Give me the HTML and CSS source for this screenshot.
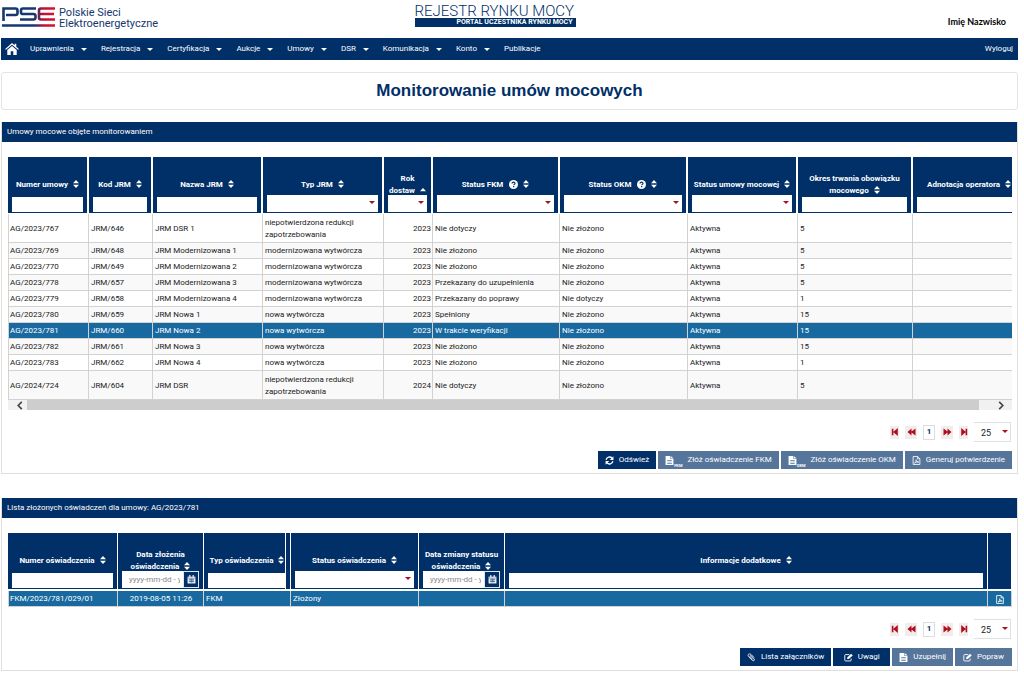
FILE: index.html
```html
<!DOCTYPE html>
<html lang="pl">
<head>
<meta charset="utf-8">
<title>Monitorowanie umów mocowych</title>
<link rel="stylesheet" href="styles.css">
</head>
<body>
<svg class="sprite" aria-hidden="true">
  <symbol id="sort" viewBox="0 0 6 8"><path d="M3 0 6 3.3H0zM0 4.7h6L3 8z"/></symbol>
  <symbol id="asc" viewBox="0 0 6 8"><path d="M3 2 6 5.3H0z"/></symbol>
  <symbol id="help" viewBox="0 0 16 16"><circle cx="8" cy="8" r="8"/><path d="M5.4 6.2C5.4 4.6 6.6 3.8 8 3.8s2.7.8 2.7 2.3C10.700 7.700 8.300 7.800 8.300 9.500" fill="none" stroke="#012f67" stroke-width="2"/><path d="M7.200 10.700h2.200v2.100H7.200z" fill="#012f67"/></symbol>
  <symbol id="cal" viewBox="0 0 16 16"><path d="M1 3h14v12H1z"/><path d="M4 0h2v4H4zM10 0h2v4h-2z"/><path d="M1 5.500h14M3 8.500h10M3 11.500h10M5.500 6.500v7M8 6.500v7M10.500 6.500v7" stroke="#012f67" stroke-width=".9"/></symbol>
  <symbol id="pdf" viewBox="0 0 14 16"><path d="M1 1h8l4 4v10H1zM9 1v4h4M3.500 12.500C6 11 7 8 6.500 6.500 6.500 9 8.500 11 11 10.800 8.500 10.300 5.500 11 3.500 12.500z" fill="none" stroke="currentColor" stroke-width="1.500"/></symbol>
  <symbol id="doc" viewBox="0 0 14 16"><path fill-rule="evenodd" d="M0 0h8v5h6v11H0zM9 0l5 4H9zM3 7.500v1.200h8V7.500zM3 10v1.200h8V10zM3 12.500v1.200h8v-1.200z"/></symbol>
  <symbol id="refresh" viewBox="0 0 16 16"><path d="M2 7a6 6 0 0 1 10.500-3M14 9a6 6 0 0 1-10.500 3" fill="none" stroke="currentColor" stroke-width="2.400"/><path d="M15 .5V7H8.500zM1 15.500V9h6.500z"/></symbol>
  <symbol id="clip" viewBox="0 0 16 16"><path d="M12.500 8 7.500 3C5.500 1 3 1.500 2.300 2.800 1.500 4 2 5.500 3 6.500l6.500 6.500c2.500 2 5-.5 3-2.800L7.500 5.300C6 4 4.500 5.300 5.700 6.800l4.500 4.500" fill="none" stroke="currentColor" stroke-width="1.600"/></symbol>
  <symbol id="edit" viewBox="0 0 17 16"><path d="M10 2.500H3Q1.500 2.500 1.500 4v9Q1.500 14.500 3 14.500h9q1.500 0 1.500-1.500v-3" fill="none" stroke="currentColor" stroke-width="1.700"/><path d="m6 8 7.500-7L16.500 4 9 11H6z"/></symbol>
  <symbol id="first" viewBox="0 0 10 10"><path d="M1 1h2v3.600L8.500 0v10L3 5.400V9H1z"/></symbol>
  <symbol id="prev" viewBox="0 0 10 10"><path d="M0 5 5 .5V4.500L10 .5v9L5 5.500v4z"/></symbol>
  <symbol id="left" viewBox="0 0 8 10"><path d="M6 1 2 5l4 4" fill="none" stroke="currentColor" stroke-width="1.800"/></symbol>
</svg>

<header class="top">
  <a class="brand" href="#" aria-label="PSE Polskie Sieci Elektroenergetyczne">
    <svg class="pse" viewBox="0 0 53 21" aria-hidden="true">
      <defs><linearGradient id="g" gradientUnits="userSpaceOnUse" x1="0" y1="0" x2="53" y2="0"><stop offset="0" stop-color="#14386f"/><stop offset=".6" stop-color="#14386f"/><stop offset=".8" stop-color="#c8102e"/><stop offset="1" stop-color="#d9122f"/></linearGradient></defs>
      <path d="M1.500 14V1.500H13.500Q15.500 1.500 15.500 3.500V6Q15.500 8 13.500 8H4M34 1.500H21Q19 1.500 19 3.300V5.200Q19 7 21 7H31.500Q33.500 7 33.500 9V10.500Q33.500 12.500 31.500 12.500H18M53 1.500H39Q37 1.500 37 3.500V10.500Q37 12.500 39 12.500H53M37 7H52M0 18.500H53" fill="none" stroke="url(#g)" stroke-width="2.600"/>
    </svg>
    <span class="brand-name">Polskie Sieci<br>Elektroenergetyczne</span>
  </a>
  <div class="portal"><span class="portal-name">REJESTR RYNKU MOCY</span><span class="portal-sub">PORTAL UCZESTNIKA RYNKU MOCY</span></div>
  <span class="user">Imię Nazwisko</span>
</header>

<nav class="nav">
  <a class="home" href="#" aria-label="Strona główna"><svg viewBox="0 0 16 14" aria-hidden="true"><path d="M8 0 0 7l1 1 7-6 7 6 1-1-3-2.700V1h-2v1.600zM8 3.500 2.500 8.200V14h4V9.500h3V14h4V8.200z"/></svg></a>
  <button class="menu">Uprawnienia</button>
  <button class="menu">Rejestracja</button>
  <button class="menu">Certyfikacja</button>
  <button class="menu">Aukcje</button>
  <button class="menu">Umowy</button>
  <button class="menu">DSR</button>
  <button class="menu">Komunikacja</button>
  <button class="menu">Konto</button>
  <a href="#">Publikacje</a>
  <a class="logout" href="#">Wyloguj</a>
</nav>

<main>
<h1 class="title">Monitorowanie umów mocowych</h1>

<section class="panel">
  <h2 class="panel-head">Umowy mocowe objęte monitorowaniem</h2>
  <div class="panel-body">
    <div class="viewport">
    <table class="grid contracts">
      <colgroup><col class="w81"><col class="w64"><col class="w110"><col class="w121"><col class="w49"><col class="w127"><col class="w128"><col class="w110"><col class="w115"><col class="w114"></colgroup>
      <thead><tr>
        <th><div class="label"><span>Numer umowy <svg class="sort"><use href="#sort"/></svg></span></div><input aria-label="Numer umowy"></th>
        <th><div class="label"><span>Kod JRM <svg class="sort"><use href="#sort"/></svg></span></div><input aria-label="Kod JRM"></th>
        <th><div class="label"><span>Nazwa JRM <svg class="sort"><use href="#sort"/></svg></span></div><input aria-label="Nazwa JRM"></th>
        <th><div class="label"><span>Typ JRM <svg class="sort"><use href="#sort"/></svg></span></div><div class="pick"><select aria-label="Typ JRM"><option></option></select></div></th>
        <th><div class="label"><span>Rok dostaw <svg class="sort"><use href="#asc"/></svg></span></div><div class="pick"><select aria-label="Rok dostaw"><option></option></select></div></th>
        <th><div class="label"><span>Status FKM <svg class="help"><use href="#help"/></svg><svg class="sort"><use href="#sort"/></svg></span></div><div class="pick"><select aria-label="Status FKM"><option></option></select></div></th>
        <th><div class="label"><span>Status OKM <svg class="help"><use href="#help"/></svg><svg class="sort"><use href="#sort"/></svg></span></div><div class="pick"><select aria-label="Status OKM"><option></option></select></div></th>
        <th><div class="label"><span>Status umowy mocowej <svg class="sort"><use href="#sort"/></svg></span></div><div class="pick"><select aria-label="Status umowy mocowej"><option></option></select></div></th>
        <th><div class="label"><span>Okres trwania obowiązku mocowego <svg class="sort"><use href="#sort"/></svg></span></div><input aria-label="Okres trwania obowiązku mocowego"></th>
        <th><div class="label"><span>Adnotacja operatora <svg class="sort"><use href="#sort"/></svg></span></div><input aria-label="Adnotacja operatora"></th>
      </tr></thead>
      <tbody>
        <tr class="tall"><td>AG/2023/767</td><td>JRM/646</td><td>JRM DSR 1</td><td>niepotwierdzona redukcji zapotrzebowania</td><td class="num">2023</td><td>Nie dotyczy</td><td>Nie złożono</td><td>Aktywna</td><td>5</td><td></td></tr>
        <tr><td>AG/2023/769</td><td>JRM/648</td><td>JRM Modernizowana 1</td><td>modernizowana wytwórcza</td><td class="num">2023</td><td>Nie złożono</td><td>Nie złożono</td><td>Aktywna</td><td>5</td><td></td></tr>
        <tr><td>AG/2023/770</td><td>JRM/649</td><td>JRM Modernizowana 2</td><td>modernizowana wytwórcza</td><td class="num">2023</td><td>Nie złożono</td><td>Nie złożono</td><td>Aktywna</td><td>5</td><td></td></tr>
        <tr><td>AG/2023/778</td><td>JRM/657</td><td>JRM Modernizowana 3</td><td>modernizowana wytwórcza</td><td class="num">2023</td><td>Przekazany do uzupełnienia</td><td>Nie złożono</td><td>Aktywna</td><td>5</td><td></td></tr>
        <tr><td>AG/2023/779</td><td>JRM/658</td><td>JRM Modernizowana 4</td><td>modernizowana wytwórcza</td><td class="num">2023</td><td>Przekazany do poprawy</td><td>Nie dotyczy</td><td>Aktywna</td><td>1</td><td></td></tr>
        <tr><td>AG/2023/780</td><td>JRM/659</td><td>JRM Nowa 1</td><td>nowa wytwórcza</td><td class="num">2023</td><td>Spełniony</td><td>Nie złożono</td><td>Aktywna</td><td>15</td><td></td></tr>
        <tr class="selected"><td>AG/2023/781</td><td>JRM/660</td><td>JRM Nowa 2</td><td>nowa wytwórcza</td><td class="num">2023</td><td>W trakcie weryfikacji</td><td>Nie złożono</td><td>Aktywna</td><td>15</td><td></td></tr>
        <tr><td>AG/2023/782</td><td>JRM/661</td><td>JRM Nowa 3</td><td>nowa wytwórcza</td><td class="num">2023</td><td>Nie złożono</td><td>Nie złożono</td><td>Aktywna</td><td>15</td><td></td></tr>
        <tr><td>AG/2023/783</td><td>JRM/662</td><td>JRM Nowa 4</td><td>nowa wytwórcza</td><td class="num">2023</td><td>Nie złożono</td><td>Nie złożono</td><td>Aktywna</td><td>1</td><td></td></tr>
        <tr class="tall"><td>AG/2024/724</td><td>JRM/604</td><td>JRM DSR</td><td>niepotwierdzona redukcji zapotrzebowania</td><td class="num">2024</td><td>Nie dotyczy</td><td>Nie złożono</td><td>Aktywna</td><td>5</td><td></td></tr>
      </tbody>
    </table>
    </div>
    <div class="scroll"><button aria-label="Przewiń w lewo"><svg><use href="#left"/></svg></button><div class="track"><div class="thumb"></div></div><button aria-label="Przewiń w prawo"><svg class="flip"><use href="#left"/></svg></button></div>
    <div class="pager">
      <button class="page-step narrow" aria-label="Pierwsza"><svg><use href="#first"/></svg></button>
      <button class="page-step" aria-label="Poprzednia"><svg><use href="#prev"/></svg></button>
      <button class="page-now">1</button>
      <button class="page-step" aria-label="Następna"><svg class="flip"><use href="#prev"/></svg></button>
      <button class="page-step narrow" aria-label="Ostatnia"><svg class="flip"><use href="#first"/></svg></button>
      <div class="pick size"><select aria-label="Liczba wierszy"><option>25</option></select></div>
    </div>
    <div class="actions">
      <button class="btn"><svg><use href="#refresh"/></svg>Odśwież</button>
      <button class="btn off"><svg><use href="#doc"/></svg><small>FKM</small>Złóż oświadczenie FKM</button>
      <button class="btn off"><svg><use href="#doc"/></svg><small>OKM</small>Złóż oświadczenie OKM</button>
      <button class="btn off"><svg><use href="#pdf"/></svg>Generuj potwierdzenie</button>
    </div>
  </div>
</section>

<section class="panel">
  <h2 class="panel-head">Lista złożonych oświadczeń dla umowy: AG/2023/781</h2>
  <div class="panel-body">
    <div class="viewport">
    <table class="grid statements">
      <colgroup><col class="w110"><col class="w86"><col class="w87"><col class="w128"><col class="w86"><col><col class="w24"></colgroup>
      <thead><tr>
        <th><div class="label"><span>Numer oświadczenia <svg class="sort"><use href="#sort"/></svg></span></div><input aria-label="Numer oświadczenia"></th>
        <th><div class="label"><span>Data złożenia oświadczenia <svg class="sort"><use href="#sort"/></svg></span></div><div class="date"><input aria-label="Data złożenia oświadczenia" placeholder="yyyy-mm-dd - yyyy-mm-dd"><button aria-label="Kalendarz"><svg><use href="#cal"/></svg></button></div></th>
        <th class="resized"><div class="label"><span>Typ oświadczenia <svg class="sort"><use href="#sort"/></svg></span></div><input aria-label="Typ oświadczenia"></th>
        <th><div class="label"><span>Status oświadczenia <svg class="sort"><use href="#sort"/></svg></span></div><div class="pick"><select aria-label="Status oświadczenia"><option></option></select></div></th>
        <th><div class="label"><span>Data zmiany statusu oświadczenia <svg class="sort"><use href="#sort"/></svg></span></div><div class="date"><input aria-label="Data zmiany statusu oświadczenia" placeholder="yyyy-mm-dd - yyyy-mm-dd"><button aria-label="Kalendarz"><svg><use href="#cal"/></svg></button></div></th>
        <th><div class="label"><span>Informacje dodatkowe <svg class="sort"><use href="#sort"/></svg></span></div><input aria-label="Informacje dodatkowe"></th>
        <th></th>
      </tr></thead>
      <tbody><tr class="selected"><td>FKM/2023/781/029/01</td><td class="mid">2019-08-05 11:26</td><td>FKM</td><td>Złożony</td><td></td><td></td><td class="mid"><button class="file" aria-label="Pobierz PDF"><svg><use href="#pdf"/></svg></button></td></tr></tbody>
    </table>
    </div>
    <div class="pager">
      <button class="page-step narrow" aria-label="Pierwsza"><svg><use href="#first"/></svg></button>
      <button class="page-step" aria-label="Poprzednia"><svg><use href="#prev"/></svg></button>
      <button class="page-now">1</button>
      <button class="page-step" aria-label="Następna"><svg class="flip"><use href="#prev"/></svg></button>
      <button class="page-step narrow" aria-label="Ostatnia"><svg class="flip"><use href="#first"/></svg></button>
      <div class="pick size"><select aria-label="Liczba wierszy"><option>25</option></select></div>
    </div>
    <div class="actions">
      <button class="btn"><svg><use href="#clip"/></svg>Lista załączników</button>
      <button class="btn"><svg><use href="#edit"/></svg>Uwagi</button>
      <button class="btn off"><svg><use href="#doc"/></svg>Uzupełnij</button>
      <button class="btn off"><svg><use href="#edit"/></svg>Popraw</button>
    </div>
  </div>
</section>
</main>
</body>
</html>
```
FILE: styles.css
```css
:root { --navy: #012f67; --blue: #1769a0; --muted: #56759b; --red: #b00d1e; --line: #d2d2d2; }
* { box-sizing: border-box; }
body { margin: 0; padding: 0 6px 0 1px; background: #fff; color: #222; font: 8px/12px Roboto, sans-serif; }
button, input, select { margin: 0; padding: 0; border: 0; border-radius: 0; background: none; color: inherit; font: inherit; }
a { color: inherit; text-decoration: none; }
svg { fill: currentColor; }
.sprite { display: none; }
.flip { transform: scaleX(-1); }

.top { display: grid; grid-template-columns: 1fr auto 1fr; align-items: start; height: 38px; padding: 5px 12px 0 1px; }
.brand { display: flex; gap: 4px; padding-top: 2px; color: #14386f; }
.pse { width: 53px; height: 21px; }
.brand-name { font-size: 11px; line-height: 11px; white-space: nowrap; }
.portal { display: flex; flex-direction: column; width: 161px; margin-right: 18px; color: var(--navy); }
.portal-name { font-size: 15px; line-height: 13px; font-weight: 300; white-space: nowrap; }
.portal-sub { padding-right: 3px; background: var(--navy); color: #fff; font-size: 7px; line-height: 9px; font-weight: 700; text-align: right; white-space: nowrap; }
.user { justify-self: end; padding-top: 11px; color: #000; font: 700 9px/12px Lato, sans-serif; }

.nav { display: flex; align-items: center; gap: 14px; height: 22px; padding: 0 5px 0 4px; background: var(--navy); color: #fff; }
.home { margin-right: -3px; }
.home svg { display: block; width: 14px; height: 12px; }
.menu { display: flex; align-items: center; gap: 7px; }
.menu::after { content: ""; border: 3px solid transparent; border-top-color: #fff; border-bottom: 0; }
.logout { margin-left: auto; }

.title { margin: 12px 0; padding: 8px 0; border: 1px solid #e4e4e4; border-radius: 3px; color: var(--navy); font: 700 17px/20px "Liberation Sans", Arial, sans-serif; text-align: center; }
.panel { margin-bottom: 24px; border: 1px solid #e2dede; border-top: 0; }
.panel-head { margin: 0; padding: 4px 5px; background: var(--navy); color: #fff; font-size: 8px; line-height: 12px; font-weight: 400; }
.panel-body { padding: 15px 5px 4px 6px; }
.viewport { overflow: hidden; }

.grid { table-layout: fixed; border-collapse: separate; border-spacing: 0; }
.contracts { width: 101.4%; }
.statements { width: 100%; }
.w24 { width: 24px; } .w49 { width: 49px; } .w64 { width: 64px; } .w81 { width: 81px; }
.w86 { width: 86px; } .w87 { width: 87px; } .w110 { width: 110px; } .w114 { width: 114px; }
.w115 { width: 115px; } .w121 { width: 121px; } .w127 { width: 127px; } .w128 { width: 128px; }
th { padding: 16px 4px 1px; border-right: 2px solid #fff; border-bottom: 1px solid #fff; background: var(--navy); color: #fff; font-size: 8px; line-height: 12px; font-weight: 700; vertical-align: top; }
.statements th { border-right-width: 1px; border-bottom-width: 2px; }
.label { display: flex; align-items: center; justify-content: center; height: 24px; }
.sort { width: 6px; height: 8px; margin-left: 3px; vertical-align: -1px; }
.help { width: 9px; height: 9px; margin: 0 2px 0 4px; vertical-align: -2px; }
th input { display: block; width: 100%; height: 15px; padding: 0 4px; background: #fff; color: #222; font-weight: 400; }
.pick { position: relative; margin-top: -2px; }
.pick select { display: block; width: 100%; height: 17px; padding: 0 6px; background: #fff; color: #222; appearance: none; }
.pick::after { content: ""; position: absolute; right: 3px; top: 6px; border: 3px solid transparent; border-top-color: var(--red); border-bottom: 0; pointer-events: none; }
.date { display: flex; margin-top: -2px; }
.date input { flex: 1; min-width: 0; height: 17px; padding: 0 3px 0 7px; }
.date input::placeholder { color: #888; opacity: 1; }
.date button { display: grid; place-items: center; width: 16px; height: 17px; border: 1px solid #dfe6ee; }
.date svg { width: 9px; height: 9px; }
.resized { border-right: 1px solid #fff; background: linear-gradient(#fff, #fff) right 4px top / 1px 100% no-repeat var(--navy); }

td { padding: 2px 1px 1px 2px; border-right: 1px solid var(--line); border-bottom: 1px solid var(--line); }
td:first-child { border-left: 1px solid var(--line); padding-left: 1px; }
.tall td { padding-top: 3px; }
tbody tr:nth-child(even) { background: #f9f9f9; }
tbody .selected { background: var(--blue); color: #fff; }
.num { text-align: right; }
.mid { text-align: center; }
.file { display: block; margin: 0 auto; }
.file svg { display: block; width: 8px; height: 9px; }

.scroll { display: flex; height: 10px; background: #f1f1f1; color: #444; }
.scroll button { display: grid; place-items: center; width: 19px; padding-left: 4px; }
.scroll button:last-child { padding: 0 4px 0 0; }
.scroll svg { width: 8px; height: 9px; }
.track { flex: 1; }
.thumb { width: 98.6%; height: 10px; background: #cdcdcd; }

.pager { display: flex; align-items: center; justify-content: flex-end; margin-top: 12px; padding-right: 1px; }
.page-step { display: grid; place-items: center; width: 12px; height: 13px; margin-right: 6px; background: #f3ecec; color: var(--red); }
.narrow { width: 9px; }
.page-step svg { width: 9px; height: 8px; }
.narrow svg { width: 8px; height: 8px; }
.page-now { width: 12px; height: 15px; margin-right: 6px; border: 1px solid #ddd; color: var(--navy); font-weight: 700; }
.size { margin: 0; }
.size select { width: 37px; height: 20px; padding: 2px 7px 0; border: 1px solid #e0e0e0; border-left: 0; font-size: 9px; }
.size::after { top: 8px; }
.actions { display: flex; justify-content: flex-end; gap: 2px; margin-top: 9px; }
.btn { display: flex; align-items: center; justify-content: center; gap: 5px; min-width: 57px; height: 18px; padding: 0 7px; background: var(--navy); color: #fff; }
.off { background: var(--muted); }
.btn svg { width: 9px; height: 9px; }
.btn small { align-self: flex-end; margin-left: -5px; font-size: 4px; line-height: 7px; font-weight: 700; }
```
